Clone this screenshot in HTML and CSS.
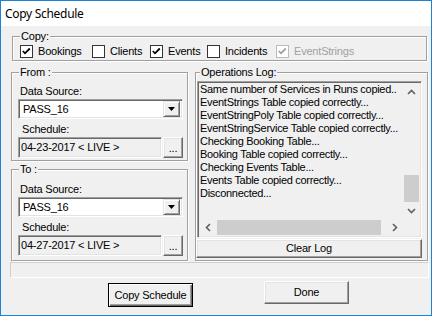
FILE: index.html
```html
<!DOCTYPE html>
<html>
<head>
<meta charset="utf-8">
<link rel="stylesheet" href="styles.css">
</head>
<body>
<div class="window">
  <div class="titlebar">Copy Schedule</div>
  <div class="client">
    <div class="group copy">
      <div class="legend">Copy:</div>
      <div class="checks">
        <div class="check w-book"><svg class="box" width="13" height="13" viewBox="0 0 13 13"><rect x="0.5" y="0.5" width="12" height="12" fill="#fff" stroke="#333"/><path d="M2.8 6 L5 8.3 L9.8 3.5" fill="none" stroke="#000" stroke-width="1.8"/></svg><span>Bookings</span></div>
        <div class="check w-cli"><svg class="box" width="13" height="13" viewBox="0 0 13 13"><rect x="0.5" y="0.5" width="12" height="12" fill="#fff" stroke="#333"/></svg><span>Clients</span></div>
        <div class="check w-ev"><svg class="box" width="13" height="13" viewBox="0 0 13 13"><rect x="0.5" y="0.5" width="12" height="12" fill="#fff" stroke="#333"/><path d="M2.8 6 L5 8.3 L9.8 3.5" fill="none" stroke="#000" stroke-width="1.8"/></svg><span>Events</span></div>
        <div class="check w-inc"><svg class="box" width="13" height="13" viewBox="0 0 13 13"><rect x="0.5" y="0.5" width="12" height="12" fill="#fff" stroke="#333"/></svg><span>Incidents</span></div>
        <div class="check disabled"><svg class="box" width="13" height="13" viewBox="0 0 13 13"><rect x="0.5" y="0.5" width="12" height="12" fill="#fff" stroke="#bcbcbc"/><path d="M2.8 6 L5 8.3 L9.8 3.5" fill="none" stroke="#a0a0a0" stroke-width="1.8"/></svg><span>EventStrings</span></div>
      </div>
    </div>

    <div class="main">
      <div class="col-left">
        <div class="group side from">
          <div class="legend">From :</div>
          <div class="lbl">Data Source:</div>
          <div class="combo"><span class="combo-text">PASS_16</span><span class="combo-btn"><svg width="7" height="4" viewBox="0 0 7 4"><path d="M0 0 H7 L3.5 4 Z" fill="#000"/></svg></span></div>
          <div class="lbl sched">Schedule:</div>
          <div class="field-row"><div class="field">04-23-2017 &lt; LIVE &gt;</div><div class="btn dots">...</div></div>
        </div>
        <div class="group side to">
          <div class="legend">To :</div>
          <div class="lbl">Data Source:</div>
          <div class="combo"><span class="combo-text">PASS_16</span><span class="combo-btn"><svg width="7" height="4" viewBox="0 0 7 4"><path d="M0 0 H7 L3.5 4 Z" fill="#000"/></svg></span></div>
          <div class="lbl sched">Schedule:</div>
          <div class="field-row"><div class="field">04-27-2017 &lt; LIVE &gt;</div><div class="btn dots">...</div></div>
        </div>
      </div>

      <div class="group ops">
        <div class="legend">Operations Log:</div>
        <div class="listbox">
          <div class="list-main">
            <div class="items">
              <div class="item">Same number of Services in Runs copied..</div>
              <div class="item">EventStrings Table copied correctly...</div>
              <div class="item">EventStringPoly Table copied correctly...</div>
              <div class="item">EventStringService Table copied correctly...</div>
              <div class="item">Checking Booking Table...</div>
              <div class="item">Booking Table copied correctly...</div>
              <div class="item">Checking Events Table...</div>
              <div class="item">Events Table copied correctly...</div>
              <div class="item">Disconnected...</div>
            </div>
            <div class="vscroll">
              <div class="sb-btn"><svg width="9" height="6" viewBox="0 0 9 6"><path d="M1 5 L4.5 1.5 L8 5" fill="none" stroke="#606060" stroke-width="1.6"/></svg></div>
              <div class="vtrack"><div class="vthumb"></div></div>
              <div class="sb-btn"><svg width="9" height="6" viewBox="0 0 9 6"><path d="M1 1 L4.5 4.5 L8 1" fill="none" stroke="#606060" stroke-width="1.6"/></svg></div>
            </div>
          </div>
          <div class="hrow">
            <div class="sb-btn"><svg width="6" height="9" viewBox="0 0 6 9"><path d="M5 1 L1.5 4.5 L5 8" fill="none" stroke="#606060" stroke-width="1.6"/></svg></div>
            <div class="htrack"><div class="hthumb"></div></div>
            <div class="sb-btn"><svg width="6" height="9" viewBox="0 0 6 9"><path d="M1 1 L4.5 4.5 L1 8" fill="none" stroke="#606060" stroke-width="1.6"/></svg></div>
            <div class="corner"></div>
          </div>
        </div>
        <div class="btn clear">Clear Log</div>
      </div>
    </div>

    <div class="status"></div>
    <div class="buttons">
      <div class="btn default">Copy Schedule</div>
      <div class="btn done">Done</div>
    </div>
  </div>
</div>
</body>
</html>
```

FILE: styles.css
```css
html, body {
  margin: 0;
  padding: 0;
  background: #fff;
}
.window {
  width: 432px;
  height: 316px;
  box-sizing: border-box;
  border: 1px solid #1883d7;
  display: flex;
  flex-direction: column;
  font-family: "Liberation Sans", Arial, sans-serif;
  font-size: 11px;
  letter-spacing: -0.2px;
  color: #000;
}
.titlebar {
  height: 25px;
  background: #fff;
  padding-left: 4px;
  font-family: "Noto Sans", "Open Sans", sans-serif;
  font-size: 12px;
  letter-spacing: -0.3px;
  line-height: 25px;
}
.client {
  flex: 1;
  background: #f0f0f0;
  padding: 10px 0 0 10px;
}
.group {
  box-sizing: border-box;
  border: 1px solid #a0a0a0;
  box-shadow: inset 1px 1px #fff, 1px 1px #fff;
}
.legend {
  width: fit-content;
  background: #f0f0f0;
  line-height: 13px;
  padding: 0 1px;
  margin: -7px 0 0 7px;
}
.copy {
  width: 415px;
  height: 25px;
  margin-left: 1px;
}
.checks {
  display: flex;
  margin: 2px 0 0 7px;
  height: 13px;
}
.check {
  display: flex;
  align-items: center;
  gap: 5px;
  line-height: 13px;
  flex: none;
}
.w-book { width: 72px; }
.w-cli { width: 58px; }
.w-ev { width: 57px; }
.w-inc { width: 69px; }
.check .box {
  display: block;
  flex: none;
}
.check.disabled span {
  color: #a0a0a0;
}
.main {
  display: flex;
  gap: 7px;
  margin-top: 11px;
}
.col-left {
  width: 177px;
  display: flex;
  flex-direction: column;
}
.side {
  padding-left: 6px;
}
.from {
  height: 89px;
}
.to {
  height: 92px;
  margin-top: 8px;
}
.side .legend {
  margin-left: 1px;
}
.lbl {
  line-height: 13px;
  padding-left: 2px;
  margin-top: 6px;
}
.to .lbl {
  margin-top: 7px;
}
.lbl.sched {
  padding-left: 4px;
  margin-top: 4px;
}
.combo {
  width: 165px;
  height: 20px;
  box-sizing: border-box;
  margin-top: 1px;
  background: #fff;
  border: 1px solid;
  border-color: #a0a0a0 #fff #fff #a0a0a0;
  box-shadow: inset 1px 1px #696969, inset -1px -1px #e3e3e3;
  display: flex;
  align-items: center;
  justify-content: space-between;
  padding: 2px 2px 2px 3px;
}
.combo-text {
  line-height: 13px;
  padding-left: 1px;
}
.combo-btn {
  width: 17px;
  height: 16px;
  box-sizing: border-box;
  background: #f0f0f0;
  border: 1px solid;
  border-color: #e3e3e3 #696969 #696969 #e3e3e3;
  box-shadow: inset 1px 1px #fff, inset -1px -1px #a0a0a0;
  display: flex;
  align-items: center;
  justify-content: center;
}
.combo-btn svg {
  display: block;
}
.field-row {
  display: flex;
  gap: 1px;
  margin-top: 1px;
}
.field {
  width: 144px;
  height: 21px;
  box-sizing: border-box;
  border: 1px solid;
  border-color: #a0a0a0 #fff #fff #a0a0a0;
  box-shadow: inset 1px 1px #696969, inset -1px -1px #e3e3e3;
  line-height: 19px;
  padding-left: 2px;
}
.btn {
  box-sizing: border-box;
  background: #f0f0f0;
  border: 1px solid;
  border-color: #fff #696969 #696969 #fff;
  box-shadow: inset -1px -1px #a0a0a0, inset 1px 1px #e3e3e3;
  display: flex;
  align-items: center;
  justify-content: center;
  line-height: 13px;
}
.dots {
  width: 20px;
  height: 21px;
  padding-top: 2px;
}
.ops {
  width: 233px;
  height: 189px;
}
.ops .legend {
  margin-left: 4px;
}
.listbox {
  width: 225px;
  height: 157px;
  box-sizing: border-box;
  margin: 2px 0 0 1px;
  border: 1px solid;
  border-color: #a0a0a0 #fff #fff #a0a0a0;
  box-shadow: inset 1px 1px #696969, inset -1px -1px #e3e3e3;
  padding: 1px;
  display: flex;
  flex-direction: column;
}
.list-main {
  flex: 1;
  display: flex;
  min-height: 0;
}
.items {
  flex: 1;
  min-width: 0;
  overflow: hidden;
  white-space: nowrap;
  padding-left: 1px;
  letter-spacing: -0.3px;
}
.item {
  line-height: 13px;
  height: 13px;
  overflow: hidden;
}
.vscroll {
  width: 17px;
  flex: none;
  display: flex;
  flex-direction: column;
  background: #f0f0f0;
}
.sb-btn {
  width: 17px;
  height: 17px;
  display: flex;
  align-items: center;
  justify-content: center;
  flex: none;
}
.vtrack {
  flex: 1;
  display: flex;
  flex-direction: column;
  justify-content: flex-end;
}
.vthumb {
  height: 27px;
  margin: 0 1px;
  background: #cdcdcd;
}
.hrow {
  height: 17px;
  display: flex;
  background: #f0f0f0;
}
.htrack {
  flex: 1;
  display: flex;
  align-items: stretch;
  padding: 1px 0;
}
.hthumb {
  width: 164px;
  margin-left: 1px;
  background: #cdcdcd;
}
.corner {
  width: 17px;
  background: #f0f0f0;
}
.clear {
  width: 226px;
  height: 19px;
  margin-top: 1px;
}
.status {
  width: 419px;
  height: 16px;
  box-sizing: border-box;
  margin: 1px 0 0 -1px;
  border: 1px solid;
  border-color: #d0d0d0 #fff #fff #d0d0d0;
}
.buttons {
  display: flex;
  align-items: flex-start;
  margin-top: 3px;
}
.default {
  width: 85px;
  height: 24px;
  margin: 2px 0 0 97px;
  border: 1px solid #000;
  box-shadow: inset 1px 1px #fff, inset -1px -1px #696969, inset -2px -2px #a0a0a0;
}
.done {
  width: 85px;
  height: 23px;
  margin-left: 71px;
}
```
